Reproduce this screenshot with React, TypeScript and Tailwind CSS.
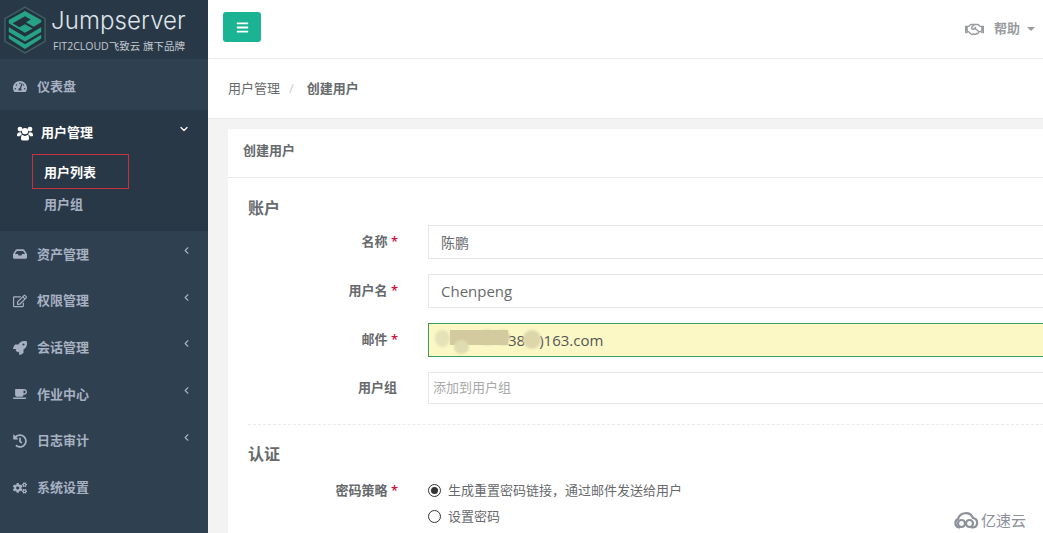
import { ChevronDown, ChevronLeft } from "lucide-react";
import type { ReactNode } from "react";
import {
  FaBars,
  FaCoffee,
  FaCogs,
  FaHistory,
  FaInbox,
  FaRegEdit,
  FaRegHandshake,
  FaRocket,
  FaTachometerAlt,
} from "react-icons/fa";

const menu = [
  { label: "资产管理", icon: <FaInbox />, arrow: true },
  { label: "权限管理", icon: <FaRegEdit />, arrow: true },
  { label: "会话管理", icon: <FaRocket />, arrow: true },
  { label: "作业中心", icon: <FaCoffee />, arrow: true },
  { label: "日志审计", icon: <FaHistory />, arrow: true },
  { label: "系统设置", icon: <FaCogs />, arrow: false },
];

const Logo = () => (
  <svg viewBox="0 0 44 50" className="w-[42px] h-[48px] shrink-0">
    <path d="M22 1 L43 13 V37 L22 49 L1 37 V13 Z" fill="#24323f" stroke="#3f6163" strokeWidth="1.5" />
    <path d="M22 5 L39 14.5 L39 17 L31 21.5 L23 17 L28 14 L22 10.5 L9 18 L16 22 L22 19 L30 23.5 L22 28 L5 18 V14.5 Z" fill="#26a386" />
    <path d="M5 22 L22 32 L39 22 V27 L22 37 L5 27 Z" fill="#26a386" />
    <path d="M5 30 L22 40 L39 30 V34 L22 45 L5 34 Z" fill="#26a386" />
  </svg>
);

const UsersIcon = () => (
  <svg viewBox="0 0 16 14" className="w-[16px] h-[15px] mr-[8px] shrink-0" fill="currentColor">
    <circle cx="3" cy="2.6" r="2.4" />
    <circle cx="13" cy="2.6" r="2.4" />
    <circle cx="8" cy="4.6" r="3.2" />
    <path d="M0 9 C0 6.5 1 5.8 3 5.8 C3.6 5.8 4 6 4.4 6.4 C4.3 7.6 4.8 8.3 5 8.8 H3.6 L2.8 9.8 H1 C0.4 9.8 0 9.6 0 9 Z" />
    <path d="M16 9 C16 6.5 15 5.8 13 5.8 C12.4 5.8 12 6 11.6 6.4 C11.7 7.6 11.2 8.3 11 8.8 H12.4 L13.2 9.8 H15 C15.6 9.8 16 9.6 16 9 Z" />
    <path d="M4 12 C4 9.6 4.6 8.4 6 8.6 C6.5 9.3 7.2 9.6 8 9.6 C8.8 9.6 9.5 9.3 10 8.6 C11.4 8.4 12 9.6 12 12 C12 13.2 11.4 14 10.4 14 H5.6 C4.6 14 4 13.2 4 12 Z" />
  </svg>
);

const MenuItem = ({ label, icon, arrow }: { label: string; icon: ReactNode; arrow: boolean }) => (
  <div className="h-[46.7px] pl-[13px] pr-[16px] flex items-center text-[13px] font-semibold text-[#a7b1c2]">
    <span className="w-[24px] text-[14px] shrink-0">{icon}</span>
    <span>{label}</span>
    {arrow && <ChevronLeft className="ml-auto mb-[8px] w-[11px] h-[11px]" strokeWidth={2.5} />}
  </div>
);

const Sidebar = () => (
  <aside className="w-[208px] shrink-0 bg-[#2f4050] flex flex-col">
    <div className="h-[59px] bg-[#293846] pl-[4px] pt-[6px] flex gap-[5px]">
      <Logo />
      <div className="text-[#dfe4ea]">
        <div className="text-[24px] leading-[30px] font-light tracking-[0.1px] font-['Inter']">Jumpserver</div>
        <div className="text-[10.5px] leading-[14px] mt-[3px] ml-[2px] text-[#c3cad2]">FIT2CLOUD飞致云 旗下品牌</div>
      </div>
    </div>
    <div className="h-[51px] pt-[4px] pl-[13px] flex items-center text-[13px] font-semibold text-[#a7b1c2]">
      <FaTachometerAlt className="w-[14px] mr-[10px]" />
      <span>仪表盘</span>
    </div>
    <div className="h-[121px] bg-[#293846] border-l-[4px] border-[#293846]">
      <div className="h-[46px] pl-[13px] pr-[14px] flex items-center text-[13px] font-semibold text-white">
        <UsersIcon />
        <span>用户管理</span>
        <ChevronDown className="ml-auto mr-[4px] mb-[8px] w-[12px] h-[12px]" strokeWidth={2.5} />
      </div>
      <div className="ml-[28px] w-[97px] h-[35px] -mt-[2px] pt-[2px] border border-[#c8323f] pl-[11px] flex items-center text-[13px] font-semibold text-white">
        用户列表
      </div>
      <div className="pl-[40px] mt-[3px] text-[13px] font-semibold text-[#a7b1c2] leading-[24px]">用户组</div>
    </div>
    <div>
      {menu.map((m) => (
        <MenuItem key={m.label} {...m} />
      ))}
    </div>
  </aside>
);

const Label = ({ text, required }: { text: string; required?: boolean }) => (
  <div className="w-[150px] text-right text-[13px] font-semibold text-[#676a6c] shrink-0">
    {text}
    {required ? <span className="text-[#d0103a]"> *</span> : <span className="pl-[1px]"></span>}
  </div>
);

const inputBase = "flex-1 ml-[30px] border border-[#e5e6e7] flex items-center text-[#676a6c]";

const Radio = ({ checked, label }: { checked?: boolean; label: string }) => (
  <div className="flex items-center gap-[7px] text-[13px] text-[#676a6c] h-[26.5px]">
    <span className="w-[13px] h-[13px] rounded-full border border-[#333] flex items-center justify-center">
      {checked && <span className="w-[7px] h-[7px] rounded-full bg-[#333]" />}
    </span>
    {label}
  </div>
);

const Blob = ({ className }: { className: string }) => (
  <span className={`absolute rounded-full blur-[1px] ${className}`} />
);

const Form = () => (
  <div className="pl-[20px] -mr-[6px]">
    <h3 className="text-[16px] font-semibold text-[#676a6c] leading-[20px] pt-[20px] pb-[6px]">账户</h3>
    <div className="flex items-center mt-[1px]">
      <Label text="名称" required />
      <div className={`${inputBase} h-[34px] pl-[12px] text-[14px]`}>陈鹏</div>
    </div>
    <div className="flex items-center mt-[15px]">
      <Label text="用户名" required />
      <div className={`${inputBase} h-[34px] pl-[12px] text-[15px]`}>Chenpeng</div>
    </div>
    <div className="flex items-center mt-[15px]">
      <Label text="邮件" required />
      <div className="relative flex-1 ml-[30px] h-[34px] border border-[#3c9c5c] bg-[#fbf8c6] flex items-center pl-[12px] text-[15px] text-[#555]">
        <span className="pl-[67px]">38</span>
        <span className="pl-[14px]">)163.com</span>
        <Blob className="left-[6px] top-[6px] w-[15px] h-[17px] bg-[#e6e2b8]" />
        <span className="absolute left-[21px] top-[6px] w-[58px] h-[15px] bg-[#d3cb9f]" />
        <Blob className="left-[25px] top-[16px] w-[15px] h-[14px] bg-[#dedcb0]" />
        <Blob className="left-[51px] top-[6px] w-[15px] h-[15px] bg-[#d3cb9f]" />
        <Blob className="left-[66px] top-[6px] w-[15px] h-[15px] bg-[#d3cb9f]" />
        <Blob className="left-[94px] top-[6px] w-[18px] h-[19px] bg-[#ddd6ab]" />
      </div>
    </div>
    <div className="flex items-center mt-[15px]">
      <Label text="用户组" />
      <div className={`${inputBase} h-[32px] pl-[4px] text-[13px] text-[#a9a9a9]`}>添加到用户组</div>
    </div>
    <div className="mt-[20px] border-t border-dashed border-[#e7eaec]" />
    <h3 className="text-[16px] font-semibold text-[#676a6c] leading-[20px] pt-[19px] pb-[12px]">认证</h3>
    <div className="flex mt-[1px]">
      <div className="pt-[4px]">
        <Label text="密码策略" required />
      </div>
      <div className="ml-[30px]">
        <Radio checked label="生成重置密码链接，通过邮件发送给用户" />
        <Radio label="设置密码" />
      </div>
    </div>
  </div>
);

export default function App() {
  return (
    <div className="relative w-[1043px] h-[533px] overflow-hidden flex bg-[#f3f3f4] font-['Open_Sans','Noto_Sans_CJK_SC',sans-serif]">
      <Sidebar />
      <main className="flex-1 flex flex-col min-w-0">
        <header className="h-[59px] shrink-0 bg-white border-b border-[#e7eaec] flex items-center pl-[15px] pr-[8px]">
          <button className="w-[38px] h-[30px] -mt-[4px] rounded-[3px] bg-[#1ab394] flex items-center justify-center text-white text-[13px]">
            <FaBars />
          </button>
          <div className="ml-auto flex items-center text-[13px] font-semibold text-[#999c9e]">
            <FaRegHandshake className="w-[19px] h-[19px] mr-[10px]" />
            帮助
            <span className="ml-[7px] w-0 h-0 border-x-[4px] border-x-transparent border-t-[4px] border-t-[#999c9e]" />
          </div>
        </header>
        <div className="h-[60px] shrink-0 bg-white border-b border-[#e7eaec] flex items-center pl-[20px] text-[13px] text-[#676a6c]">
          用户管理
          <span className="ml-[9px] mr-[13px] text-[#ccc]">/</span>
          <span className="font-semibold">创建用户</span>
        </div>
        <section className="ml-[20px] mt-[10px] flex-1 bg-white">
          <div className="h-[49px] pb-[4px] pl-[15px] border-b border-[#e7eaec] flex items-center text-[13px] font-semibold text-[#676a6c]">
            创建用户
          </div>
          <Form />
        </section>
      </main>
      <div className="absolute right-[17px] bottom-[2px] flex items-center gap-[2px] text-[#8b9099] text-[15px]">
        <svg viewBox="0 0 26 18" className="w-[26px] h-[18px]" fill="none" stroke="#8b9099" strokeWidth="2.2">
          <path d="M7 16.5 H6 A4.5 4.5 0 0 1 5 8 A8 8 0 0 1 20 7 A4.8 4.8 0 0 1 20 16.5 H18" />
          <circle cx="8.5" cy="12.5" r="3.5" />
          <circle cx="16.5" cy="12.5" r="3.5" />
        </svg>
        亿速云
      </div>
    </div>
  );
}
